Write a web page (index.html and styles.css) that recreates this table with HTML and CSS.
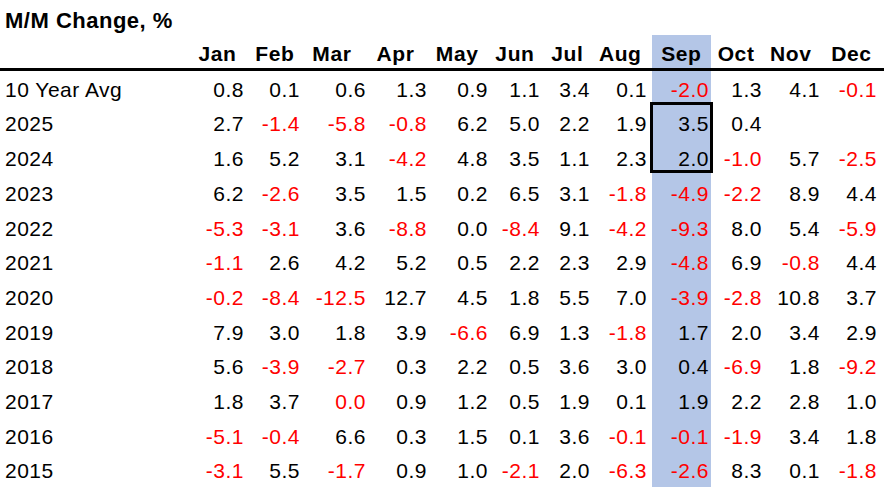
FILE: index.html
```html
<!DOCTYPE html>
<html>
<head>
<meta charset="utf-8">
<link rel="stylesheet" href="styles.css">
</head>
<body>
<div class="sheet">
  <div class="title">M/M Change, %</div>
  <div class="table">
    <div class="row hdr">
      <div class="lab"></div>
      <div class="c">Jan</div><div class="c">Feb</div><div class="c">Mar</div><div class="c">Apr</div>
      <div class="c">May</div><div class="c">Jun</div><div class="c">Jul</div><div class="c">Aug</div>
      <div class="c sep">Sep</div><div class="c">Oct</div><div class="c">Nov</div><div class="c">Dec</div>
      <div></div>
    </div>
    <div class="row"><div class="lab">10 Year Avg</div><div class="c">0.8</div><div class="c">0.1</div><div class="c">0.6</div><div class="c">1.3</div><div class="c">0.9</div><div class="c">1.1</div><div class="c">3.4</div><div class="c">0.1</div><div class="c sep neg">-2.0</div><div class="c">1.3</div><div class="c">4.1</div><div class="c neg">-0.1</div><div></div></div>
    <div class="row"><div class="lab">2025</div><div class="c">2.7</div><div class="c neg">-1.4</div><div class="c neg">-5.8</div><div class="c neg">-0.8</div><div class="c">6.2</div><div class="c">5.0</div><div class="c">2.2</div><div class="c">1.9</div><div class="c sep">3.5</div><div class="c">0.4</div><div class="c"></div><div class="c"></div><div></div></div>
    <div class="row"><div class="lab">2024</div><div class="c">1.6</div><div class="c">5.2</div><div class="c">3.1</div><div class="c neg">-4.2</div><div class="c">4.8</div><div class="c">3.5</div><div class="c">1.1</div><div class="c">2.3</div><div class="c sep">2.0</div><div class="c neg">-1.0</div><div class="c">5.7</div><div class="c neg">-2.5</div><div></div></div>
    <div class="row"><div class="lab">2023</div><div class="c">6.2</div><div class="c neg">-2.6</div><div class="c">3.5</div><div class="c">1.5</div><div class="c">0.2</div><div class="c">6.5</div><div class="c">3.1</div><div class="c neg">-1.8</div><div class="c sep neg">-4.9</div><div class="c neg">-2.2</div><div class="c">8.9</div><div class="c">4.4</div><div></div></div>
    <div class="row"><div class="lab">2022</div><div class="c neg">-5.3</div><div class="c neg">-3.1</div><div class="c">3.6</div><div class="c neg">-8.8</div><div class="c">0.0</div><div class="c neg">-8.4</div><div class="c">9.1</div><div class="c neg">-4.2</div><div class="c sep neg">-9.3</div><div class="c">8.0</div><div class="c">5.4</div><div class="c neg">-5.9</div><div></div></div>
    <div class="row"><div class="lab">2021</div><div class="c neg">-1.1</div><div class="c">2.6</div><div class="c">4.2</div><div class="c">5.2</div><div class="c">0.5</div><div class="c">2.2</div><div class="c">2.3</div><div class="c">2.9</div><div class="c sep neg">-4.8</div><div class="c">6.9</div><div class="c neg">-0.8</div><div class="c">4.4</div><div></div></div>
    <div class="row"><div class="lab">2020</div><div class="c neg">-0.2</div><div class="c neg">-8.4</div><div class="c neg">-12.5</div><div class="c">12.7</div><div class="c">4.5</div><div class="c">1.8</div><div class="c">5.5</div><div class="c">7.0</div><div class="c sep neg">-3.9</div><div class="c neg">-2.8</div><div class="c">10.8</div><div class="c">3.7</div><div></div></div>
    <div class="row"><div class="lab">2019</div><div class="c">7.9</div><div class="c">3.0</div><div class="c">1.8</div><div class="c">3.9</div><div class="c neg">-6.6</div><div class="c">6.9</div><div class="c">1.3</div><div class="c neg">-1.8</div><div class="c sep">1.7</div><div class="c">2.0</div><div class="c">3.4</div><div class="c">2.9</div><div></div></div>
    <div class="row"><div class="lab">2018</div><div class="c">5.6</div><div class="c neg">-3.9</div><div class="c neg">-2.7</div><div class="c">0.3</div><div class="c">2.2</div><div class="c">0.5</div><div class="c">3.6</div><div class="c">3.0</div><div class="c sep">0.4</div><div class="c neg">-6.9</div><div class="c">1.8</div><div class="c neg">-9.2</div><div></div></div>
    <div class="row"><div class="lab">2017</div><div class="c">1.8</div><div class="c">3.7</div><div class="c neg">0.0</div><div class="c">0.9</div><div class="c">1.2</div><div class="c">0.5</div><div class="c">1.9</div><div class="c">0.1</div><div class="c sep">1.9</div><div class="c">2.2</div><div class="c">2.8</div><div class="c">1.0</div><div></div></div>
    <div class="row"><div class="lab">2016</div><div class="c neg">-5.1</div><div class="c neg">-0.4</div><div class="c">6.6</div><div class="c">0.3</div><div class="c">1.5</div><div class="c">0.1</div><div class="c">3.6</div><div class="c neg">-0.1</div><div class="c sep neg">-0.1</div><div class="c neg">-1.9</div><div class="c">3.4</div><div class="c">1.8</div><div></div></div>
    <div class="row last"><div class="lab">2015</div><div class="c neg">-3.1</div><div class="c">5.5</div><div class="c neg">-1.7</div><div class="c">0.9</div><div class="c">1.0</div><div class="c neg">-2.1</div><div class="c">2.0</div><div class="c neg">-6.3</div><div class="c sep neg">-2.6</div><div class="c">8.3</div><div class="c">0.1</div><div class="c neg">-1.8</div><div></div></div>
    <div class="selbox"></div>
  </div>
</div>
</body>
</html>
```

FILE: styles.css
```css
html, body {
  margin: 0;
  padding: 0;
  background: #ffffff;
}

.sheet {
  width: 888px;
  height: 492px;
  overflow: hidden;
  font-family: "Liberation Sans", Arial, sans-serif;
  color: #000000;
}

.title {
  height: 35px;
  box-sizing: border-box;
  padding: 8px 0 0 5px;
  font-size: 22px;
  line-height: 26px;
  font-weight: bold;
  letter-spacing: 0.5px;
}

.table {
  position: relative;
  width: 884px;
}

.row {
  display: grid;
  grid-template-columns: 185px 61px 56px 66px 61px 61px 52px 50px 57px 62px 53px 58px 57px 5px;
  height: 34.7px;
  box-sizing: border-box;
  padding-top: 2.8px;
  font-size: 21px;
  line-height: 31.9px;
  letter-spacing: 0.5px;
  white-space: nowrap;
}

.row.last {
  height: 33px;
}

.row .c {
  text-align: right;
  padding-right: 2px;
}

.row .sep {
  border-left: 3px solid transparent;
  background-color: #b4c6e7;
  background-clip: padding-box;
  margin-top: -2.8px;
  padding-top: 2.8px;
}

.lab {
  padding-left: 5px;
}

.neg {
  color: #ff0000;
}

.hdr {
  height: 36px;
  padding-top: 0;
  border-bottom: 3px solid #000000;
  font-size: 21px;
  font-weight: bold;
  letter-spacing: 0.6px;
  line-height: 29px;
}

.hdr .c {
  padding-top: 4px;
}

.hdr .sep {
  margin-top: 0;
  padding-top: 4px;
}

.hdr .c:nth-child(2) { padding-right: 9.5px; }
.hdr .c:nth-child(3) { padding-right: 7.5px; }
.hdr .c:nth-child(4) { padding-right: 16.5px; }
.hdr .c:nth-child(5) { padding-right: 14.5px; }
.hdr .c:nth-child(6) { padding-right: 11.5px; }
.hdr .c:nth-child(7) { padding-right: 7.5px; }
.hdr .c:nth-child(8) { padding-right: 8.5px; }
.hdr .c:nth-child(9) { padding-right: 7.5px; }
.hdr .c:nth-child(10) { padding-right: 9.5px; }
.hdr .c:nth-child(11) { padding-right: 9.5px; }
.hdr .c:nth-child(12) { padding-right: 10.5px; }
.hdr .c:nth-child(13) { padding-right: 7.5px; }

.selbox {
  position: absolute;
  left: 650px;
  top: 67px;
  width: 63px;
  height: 71px;
  box-sizing: border-box;
  border: 3px solid #000000;
}
```
